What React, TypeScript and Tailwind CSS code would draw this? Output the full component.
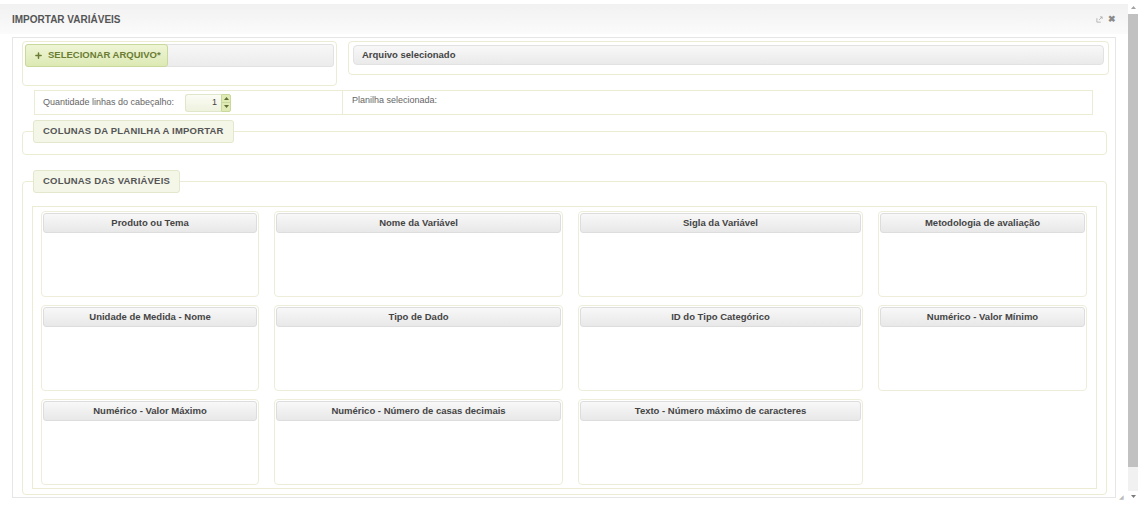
import { Plus } from 'lucide-react';

const font = { fontFamily: '"Liberation Sans", Arial, sans-serif' };

const columns = [
  'Produto ou Tema',
  'Nome da Variável',
  'Sigla da Variável',
  'Metodologia de avaliação',
  'Unidade de Medida - Nome',
  'Tipo de Dado',
  'ID do Tipo Categórico',
  'Numérico - Valor Mínimo',
  'Numérico - Valor Máximo',
  'Numérico - Número de casas decimais',
  'Texto - Número máximo de caracteres',
];

const Legend = ({ children }: { children: React.ReactNode }) => (
  <div className="relative z-10 ml-[11px] flex h-[23px] w-fit items-center rounded-[3px] border border-[#e3e7cc] bg-[#f4f6e8] px-[9px] text-[9.5px] font-bold tracking-[0.2px] text-[#555]">
    {children}
  </div>
);

const ColumnCard = ({ title }: { title: string }) => (
  <div className="h-[86px] rounded-[4px] border border-[#eeedd9] bg-white p-[1px]">
    <div className="flex h-[20px] items-center justify-center rounded-[3px] border border-[#dddddd] bg-gradient-to-b from-[#f8f8f8] to-[#e8e8e8] text-[9.5px] font-bold text-[#444]">
      {title}
    </div>
  </div>
);

const App = () => {
  return (
    <div className="flex h-[511px] w-[1143px] overflow-hidden bg-white" style={font}>
      <div className="w-[1128px]">
        {/* Dialog title */}
        <div className="mt-[4px] flex h-[30px] items-center justify-between bg-gradient-to-b from-[#f1f1f1] to-[#fbfbfb] pl-[12px] pr-[12px]">
          <span className="text-[10px] font-bold text-[#555]">IMPORTAR VARIÁVEIS</span>
          <div className="flex items-center gap-[5px] text-[#999]">
            <svg width="7" height="7" viewBox="0 0 8 8" fill="none" stroke="#b0b0b0" strokeWidth="1">
              <path d="M1 2.5V7h4.5" />
              <path d="M3.5 4.5L7 1M4.5 1H7v2.5" />
            </svg>
            <span className="text-[9px] font-bold leading-none text-[#8a8a8a]">✖</span>
          </div>
        </div>

        {/* Content panel */}
        <div className="ml-[12px] mt-[3px] h-[461px] w-[1104px] border border-[#e6e6e6] pt-[3px]">
          {/* Row 1 */}
          <div className="flex items-start gap-[11px] pl-[9px]">
            <div className="h-[45px] w-[315px] rounded-[4px] border border-[#ecebd3] p-[2px]">
              <div className="flex h-[23px] rounded-[3px] border border-[#e2e2e2] bg-gradient-to-b from-[#f7f7f7] to-[#ececec]">
                <button className="-m-px flex h-[23px] w-[143px] items-center gap-[5px] rounded-[3px] border border-[#c9d99c] bg-gradient-to-b from-[#eef5d6] to-[#dde9b4] pl-[8px] text-[9.5px] font-bold text-[#6b7d34]">
                  <Plus size={9} strokeWidth={4} />
                  SELECIONAR ARQUIVO*
                </button>
              </div>
            </div>
            <div className="h-[34px] w-[761px] rounded-[4px] border border-[#ecebd3] px-[4px] pt-[3px]">
              <div className="flex h-[20px] items-center rounded-[4px] border border-[#e2e2e2] bg-gradient-to-b from-[#f8f8f8] to-[#eaeaea] pl-[8px] text-[9.5px] font-bold text-[#444]">
                Arquivo selecionado
              </div>
            </div>
          </div>

          {/* Row 2 */}
          <div className="ml-[21px] mt-[4px] flex">
            <div className="flex h-[25px] w-[309px] items-center border border-[#ecebd3] pl-[8px] text-[9px] text-[#666]">
              <span>Quantidade linhas do cabeçalho:</span>
              <div className="ml-[11px] flex h-[18px]">
                <div className="flex w-[36px] items-center justify-end rounded-l-[3px] border border-r-0 border-[#e0e6c9] bg-gradient-to-b from-[#fbfcf5] to-[#eef2de] pr-[4px] text-[9px] text-[#444]">
                  1
                </div>
                <div className="flex w-[10px] flex-col rounded-r-[2px] border border-[#c9d99c] bg-[#dfeab5]">
                  <div className="flex flex-1 items-center justify-center border-b border-[#c9d99c]">
                    <svg width="5" height="3" viewBox="0 0 5 3"><path d="M0 3L2.5 0 5 3z" fill="#5e6d33" /></svg>
                  </div>
                  <div className="flex flex-1 items-center justify-center">
                    <svg width="5" height="3" viewBox="0 0 5 3"><path d="M0 0L2.5 3 5 0z" fill="#5e6d33" /></svg>
                  </div>
                </div>
              </div>
            </div>
            <div className="h-[25px] w-[750px] border border-l-0 border-[#ecebd3] pl-[9px] pt-[3px] text-[9px] text-[#666]">
              Planilha selecionada:
            </div>
          </div>

          {/* Colunas da planilha */}
          <div className="ml-[9px] mt-[5px] w-[1085px]">
            <Legend>COLUNAS DA PLANILHA A IMPORTAR</Legend>
            <div className="-mt-[12px] h-[24px] rounded-[4px] border border-[#ecebd3]" />
          </div>

          {/* Colunas das variáveis */}
          <div className="ml-[9px] mt-[15px] w-[1085px]">
            <Legend>COLUNAS DAS VARIÁVEIS</Legend>
            <div className="-mt-[12px] h-[314px] rounded-[4px] border border-[#ecebd3] px-[9px] pt-[24px]">
              <div className="h-[283px] border border-[#ecebd3] px-[8px] pt-[4px]">
                <div className="grid grid-cols-[218px_289px_285px_209px] gap-x-[15px] gap-y-[8px]">
                  {columns.map((c) => (
                    <ColumnCard key={c} title={c} />
                  ))}
                </div>
              </div>
            </div>
          </div>
        </div>
        <div className="ml-[1119px] -mt-[4px] text-[6px] leading-none text-[#bbb]">◢</div>
      </div>

      {/* Scrollbar */}
      <div className="flex h-[511px] w-[10px] flex-col bg-[#f1f1f1]">
        <div className="flex h-[14px] items-center justify-center bg-white">
          <svg width="5" height="3" viewBox="0 0 5 3"><path d="M0 3L2.5 0 5 3z" fill="#a3a3a3" /></svg>
        </div>
        <div className="h-[453px] bg-[#c1c1c1]" />
        <div className="flex-1" />
        <div className="flex h-[20px] items-start justify-center bg-white pt-[4px]">
          <svg width="5" height="3" viewBox="0 0 5 3"><path d="M0 0L2.5 3 5 0z" fill="#7a7a7a" /></svg>
        </div>
      </div>
    </div>
  );
};

export default App;
